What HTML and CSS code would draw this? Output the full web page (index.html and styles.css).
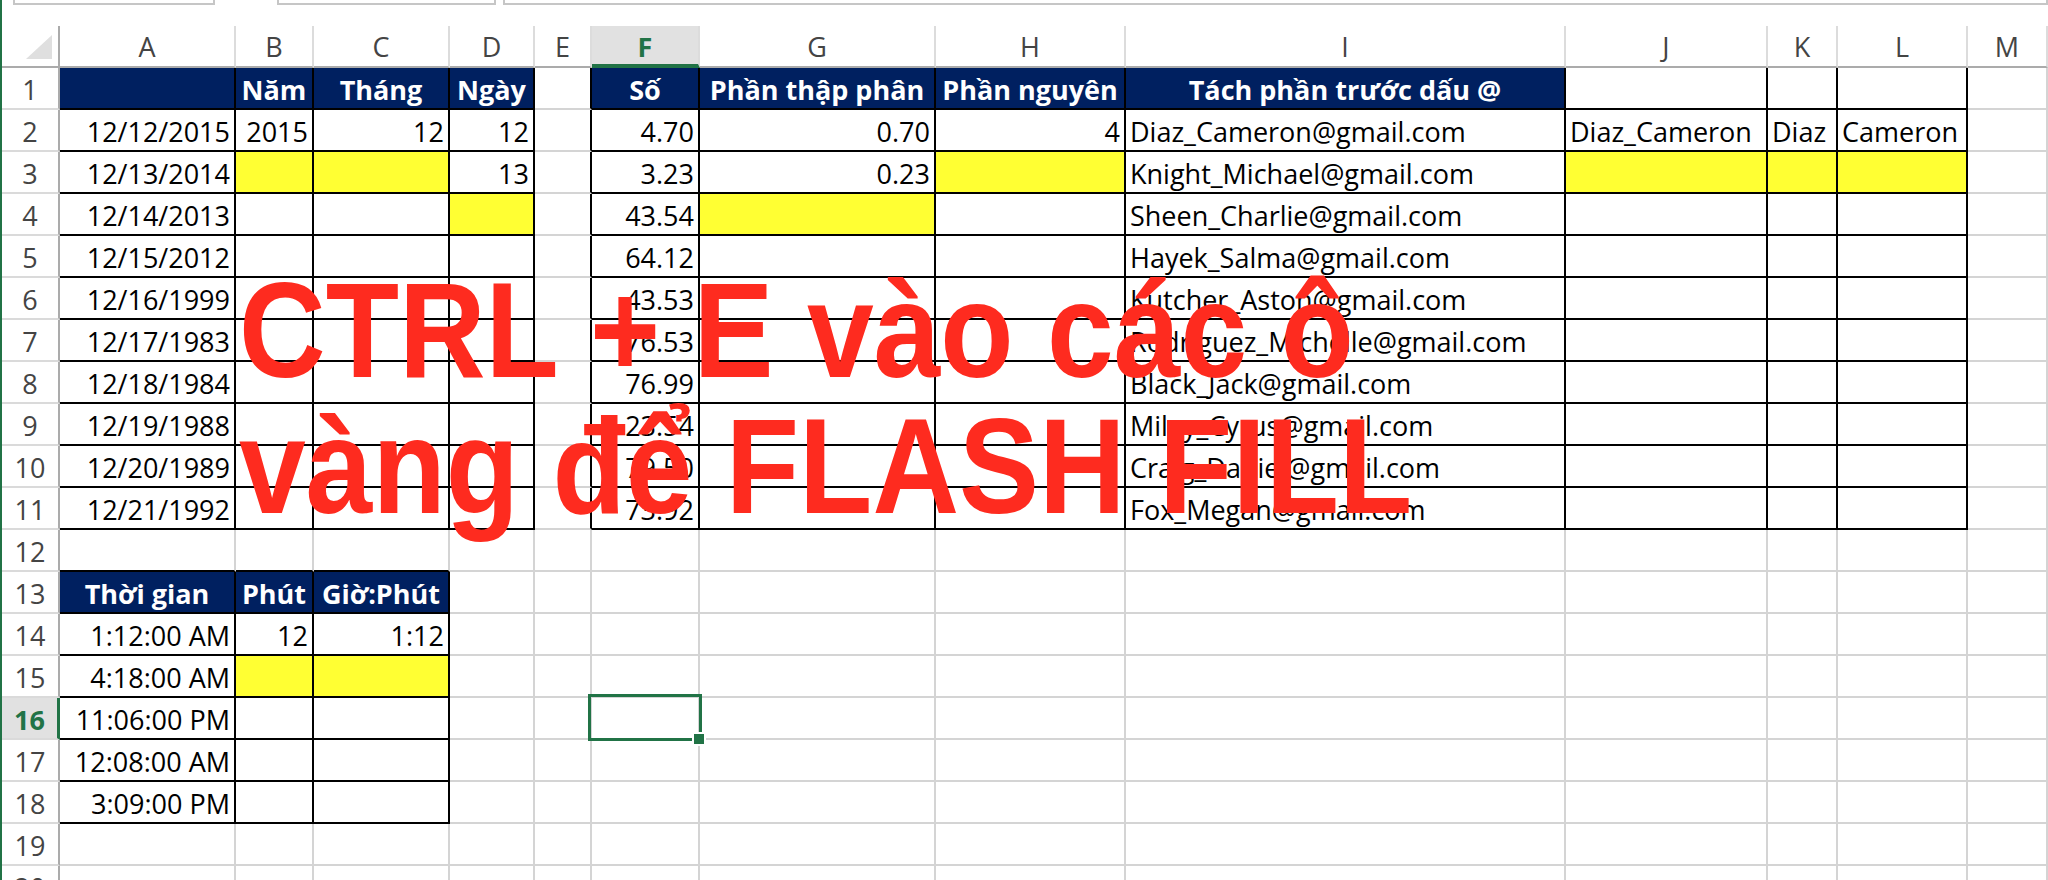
FILE: index.html
```html
<!DOCTYPE html>
<html lang="vi">
<head>
<meta charset="utf-8">
<title>Flash Fill</title>
<link rel="stylesheet" href="styles.css">
</head>
<body>
<div class="app">
  <div class="topbar"><div class="box b1"></div><div class="box b2"></div><div class="box b3"></div></div>
  <div class="sheet">
    <div class="row">
      <div class="corner"><div class="tri"></div></div>
      <div class="ch">A</div><div class="ch">B</div><div class="ch">C</div><div class="ch">D</div><div class="ch">E</div>
      <div class="ch sel">F</div><div class="ch">G</div><div class="ch">H</div><div class="ch">I</div><div class="ch">J</div>
      <div class="ch">K</div><div class="ch">L</div><div class="ch">M</div>
    </div>
    <div class="row">
      <div class="rh">1</div>
      <div class="c t h"></div><div class="c t h">Năm</div><div class="c t h">Tháng</div><div class="c t h">Ngày</div>
      <div class="c kr"></div>
      <div class="c t h">Số</div><div class="c t h">Phần thập phân</div><div class="c t h">Phần nguyên</div><div class="c t h">Tách phần trước dấu @</div>
      <div class="c t"></div><div class="c t"></div><div class="c t"></div><div class="c"></div>
    </div>
    <div class="row">
      <div class="rh">2</div>
      <div class="c t n">12/12/2015</div><div class="c t n">2015</div><div class="c t n">12</div><div class="c t n">12</div>
      <div class="c kr"></div>
      <div class="c t n">4.70</div><div class="c t n">0.70</div><div class="c t n">4</div><div class="c t">Diaz_Cameron@gmail.com</div>
      <div class="c t">Diaz_Cameron</div><div class="c t">Diaz</div><div class="c t">Cameron</div><div class="c"></div>
    </div>
    <div class="row">
      <div class="rh">3</div>
      <div class="c t n">12/13/2014</div><div class="c t y"></div><div class="c t y"></div><div class="c t n">13</div>
      <div class="c kr"></div>
      <div class="c t n">3.23</div><div class="c t n">0.23</div><div class="c t y"></div><div class="c t">Knight_Michael@gmail.com</div>
      <div class="c t y"></div><div class="c t y"></div><div class="c t y"></div><div class="c"></div>
    </div>
    <div class="row">
      <div class="rh">4</div>
      <div class="c t n">12/14/2013</div><div class="c t"></div><div class="c t"></div><div class="c t y"></div>
      <div class="c kr"></div>
      <div class="c t n">43.54</div><div class="c t y"></div><div class="c t"></div><div class="c t">Sheen_Charlie@gmail.com</div>
      <div class="c t"></div><div class="c t"></div><div class="c t"></div><div class="c"></div>
    </div>
    <div class="row">
      <div class="rh">5</div>
      <div class="c t n">12/15/2012</div><div class="c t"></div><div class="c t"></div><div class="c t"></div>
      <div class="c kr"></div>
      <div class="c t n">64.12</div><div class="c t"></div><div class="c t"></div><div class="c t">Hayek_Salma@gmail.com</div>
      <div class="c t"></div><div class="c t"></div><div class="c t"></div><div class="c"></div>
    </div>
    <div class="row">
      <div class="rh">6</div>
      <div class="c t n">12/16/1999</div><div class="c t"></div><div class="c t"></div><div class="c t"></div>
      <div class="c kr"></div>
      <div class="c t n">43.53</div><div class="c t"></div><div class="c t"></div><div class="c t">Kutcher_Aston@gmail.com</div>
      <div class="c t"></div><div class="c t"></div><div class="c t"></div><div class="c"></div>
    </div>
    <div class="row">
      <div class="rh">7</div>
      <div class="c t n">12/17/1983</div><div class="c t"></div><div class="c t"></div><div class="c t"></div>
      <div class="c kr"></div>
      <div class="c t n">76.53</div><div class="c t"></div><div class="c t"></div><div class="c t">Rodriguez_Michelle@gmail.com</div>
      <div class="c t"></div><div class="c t"></div><div class="c t"></div><div class="c"></div>
    </div>
    <div class="row">
      <div class="rh">8</div>
      <div class="c t n">12/18/1984</div><div class="c t"></div><div class="c t"></div><div class="c t"></div>
      <div class="c kr"></div>
      <div class="c t n">76.99</div><div class="c t"></div><div class="c t"></div><div class="c t">Black_Jack@gmail.com</div>
      <div class="c t"></div><div class="c t"></div><div class="c t"></div><div class="c"></div>
    </div>
    <div class="row">
      <div class="rh">9</div>
      <div class="c t n">12/19/1988</div><div class="c t"></div><div class="c t"></div><div class="c t"></div>
      <div class="c kr"></div>
      <div class="c t n">23.54</div><div class="c t"></div><div class="c t"></div><div class="c t">Miley_Cyrus@gmail.com</div>
      <div class="c t"></div><div class="c t"></div><div class="c t"></div><div class="c"></div>
    </div>
    <div class="row">
      <div class="rh">10</div>
      <div class="c t n">12/20/1989</div><div class="c t"></div><div class="c t"></div><div class="c t"></div>
      <div class="c kr"></div>
      <div class="c t n">79.50</div><div class="c t"></div><div class="c t"></div><div class="c t">Craig_Daniel@gmail.com</div>
      <div class="c t"></div><div class="c t"></div><div class="c t"></div><div class="c"></div>
    </div>
    <div class="row">
      <div class="rh">11</div>
      <div class="c t n">12/21/1992</div><div class="c t"></div><div class="c t"></div><div class="c t"></div>
      <div class="c kr"></div>
      <div class="c t n">73.92</div><div class="c t"></div><div class="c t"></div><div class="c t">Fox_Megan@gmail.com</div>
      <div class="c t"></div><div class="c t"></div><div class="c t"></div><div class="c"></div>
    </div>
    <div class="row">
      <div class="rh">12</div>
      <div class="c kb"></div><div class="c kb"></div><div class="c kb"></div><div class="c"></div>
      <div class="c"></div><div class="c"></div><div class="c"></div><div class="c"></div><div class="c"></div>
      <div class="c"></div><div class="c"></div><div class="c"></div><div class="c"></div>
    </div>
    <div class="row">
      <div class="rh">13</div>
      <div class="c t h">Thời gian</div><div class="c t h">Phút</div><div class="c t h">Giờ:Phút</div><div class="c"></div>
      <div class="c"></div><div class="c"></div><div class="c"></div><div class="c"></div><div class="c"></div>
      <div class="c"></div><div class="c"></div><div class="c"></div><div class="c"></div>
    </div>
    <div class="row">
      <div class="rh">14</div>
      <div class="c t n">1:12:00 AM</div><div class="c t n">12</div><div class="c t n">1:12</div><div class="c"></div>
      <div class="c"></div><div class="c"></div><div class="c"></div><div class="c"></div><div class="c"></div>
      <div class="c"></div><div class="c"></div><div class="c"></div><div class="c"></div>
    </div>
    <div class="row">
      <div class="rh">15</div>
      <div class="c t n">4:18:00 AM</div><div class="c t y"></div><div class="c t y"></div><div class="c"></div>
      <div class="c"></div><div class="c"></div><div class="c"></div><div class="c"></div><div class="c"></div>
      <div class="c"></div><div class="c"></div><div class="c"></div><div class="c"></div>
    </div>
    <div class="row">
      <div class="rh sel">16</div>
      <div class="c t n">11:06:00 PM</div><div class="c t"></div><div class="c t"></div><div class="c"></div>
      <div class="c"></div>
      <div class="c selcell"><span class="selbox"></span><span class="handle"></span></div>
      <div class="c"></div><div class="c"></div><div class="c"></div>
      <div class="c"></div><div class="c"></div><div class="c"></div><div class="c"></div>
    </div>
    <div class="row">
      <div class="rh">17</div>
      <div class="c t n">12:08:00 AM</div><div class="c t"></div><div class="c t"></div><div class="c"></div>
      <div class="c"></div><div class="c"></div><div class="c"></div><div class="c"></div><div class="c"></div>
      <div class="c"></div><div class="c"></div><div class="c"></div><div class="c"></div>
    </div>
    <div class="row">
      <div class="rh">18</div>
      <div class="c t n">3:09:00 PM</div><div class="c t"></div><div class="c t"></div><div class="c"></div>
      <div class="c"></div><div class="c"></div><div class="c"></div><div class="c"></div><div class="c"></div>
      <div class="c"></div><div class="c"></div><div class="c"></div><div class="c"></div>
    </div>
    <div class="row">
      <div class="rh">19</div>
      <div class="c"></div><div class="c"></div><div class="c"></div><div class="c"></div>
      <div class="c"></div><div class="c"></div><div class="c"></div><div class="c"></div><div class="c"></div>
      <div class="c"></div><div class="c"></div><div class="c"></div><div class="c"></div>
    </div>
    <div class="row">
      <div class="rh">20</div>
      <div class="c"></div><div class="c"></div><div class="c"></div><div class="c"></div>
      <div class="c"></div><div class="c"></div><div class="c"></div><div class="c"></div><div class="c"></div>
      <div class="c"></div><div class="c"></div><div class="c"></div><div class="c"></div>
    </div>
  </div>
  <div class="overlay">CTRL + E vào các ô<br>vàng để FLASH FILL</div>
</div>
</body>
</html>
```

FILE: styles.css
```css
* { box-sizing: border-box; margin: 0; padding: 0; }
body { margin: 0; background: #fff; overflow: hidden; }

.app {
  position: relative;
  width: 2048px;
  height: 880px;
  overflow: hidden;
  border-left: 2px solid #217346;
  background: #fff;
  font-family: "Open Sans", "Noto Sans", sans-serif;
  font-size: 27px;
  color: #000;
}

.topbar { height: 26px; display: flex; align-items: flex-start; }
.box { height: 5px; border: 2px solid #c6c6c6; border-top: none; }
.b1 { margin-left: 11px; width: 202px; }
.b2 { margin-left: 62px; width: 219px; }
.b3 { margin-left: 7px; flex: 1; }

.row {
  display: grid;
  grid-template-columns: 58px 176px 78px 136px 85px 57px 108px 236px 190px 440px 202px 70px 130px 1fr;
  height: 42px;
}

.corner {
  display: flex;
  align-items: flex-end;
  justify-content: flex-end;
  padding: 0 6px 7px 0;
  border-right: 2px solid #ababab;
  border-bottom: 2px solid #ababab;
}
.tri {
  width: 26px;
  height: 24px;
  background: #dfdfdf;
  clip-path: polygon(100% 0, 100% 100%, 0 100%);
}

.ch {
  display: flex;
  align-items: flex-end;
  justify-content: center;
  padding-bottom: 4px;
  line-height: 30px;
  color: #444;
  border-right: 2px solid #dcdcdc;
  border-bottom: 2px solid #ababab;
}
.ch.sel {
  background: #e1e1e1;
  color: #217346;
  font-weight: 700;
  border-bottom: 4px solid #217346;
  padding-bottom: 2px;
}

.rh {
  display: flex;
  align-items: flex-end;
  justify-content: center;
  padding-bottom: 3.5px;
  line-height: 30px;
  color: #444;
  border-right: 2px solid #ababab;
  border-bottom: 2px solid #dadada;
}
.rh.sel {
  background: #e1e1e1;
  color: #217346;
  font-weight: 700;
  border-right: 3px solid #217346;
}

.c {
  display: flex;
  align-items: flex-end;
  justify-content: flex-start;
  padding: 0 4px 3.5px;
  line-height: 30px;
  white-space: nowrap;
  border-right: 2px solid #d4d4d4;
  border-bottom: 2px solid #d4d4d4;
}
.n { justify-content: flex-end; }
.h { background: #002060; color: #fff; font-weight: 700; justify-content: center; }
.y { background: #ffff33; }
.t { border-right-color: #000; border-bottom-color: #000; }
.kr { border-right-color: #000; }
.kb { border-bottom-color: #000; }

.selcell { position: relative; }
.selbox {
  position: absolute;
  left: -4px;
  top: -4px;
  right: -4px;
  bottom: -3px;
  border: 3px solid #217346;
}
.handle {
  position: absolute;
  right: -6px;
  bottom: -6px;
  width: 10px;
  height: 10px;
  background: #217346;
  outline: 2px solid #fff;
}

.overlay {
  position: absolute;
  left: 237px;
  top: 262px;
  font-family: "Liberation Sans", Arial, sans-serif;
  font-weight: 700;
  font-size: 120px;
  line-height: 120px;
  color: #fe2b1f;
  white-space: nowrap;
  transform: scaleY(1.13);
  transform-origin: 0 0;
}
```
